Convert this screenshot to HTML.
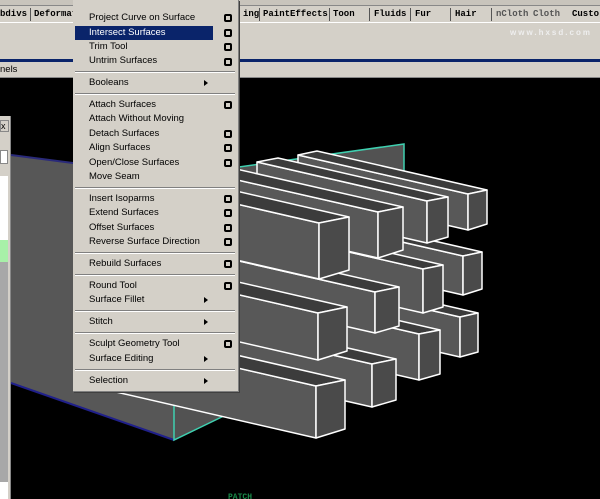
<!DOCTYPE html>
<html><head><meta charset="utf-8"><style>
*{margin:0;padding:0;box-sizing:border-box}
body{width:600px;height:499px;overflow:hidden;background:#000;position:relative;font-family:"Liberation Sans",sans-serif}
.abs{position:absolute}
.tabs{left:0;top:0;width:600px;height:60px;background:#d4d0c8}
.tabrow{top:7px;left:0;height:15px;width:600px;font:bold 9px "Liberation Mono",monospace;color:#000;white-space:nowrap}
.tabrow span{position:absolute;top:2px}
.sep{position:absolute;top:1px;width:1px;height:13px;background:#555}
.menu{left:73px;top:0;width:166px;height:392px;background:#d4d0c8;border-right:1px solid #808080;border-bottom:1px solid #808080;box-shadow:1px 1px 0 #404040;font-size:9.5px;color:#000}
.it{position:absolute;left:16px;height:14px;line-height:14px}
.ob{position:absolute;left:151px;width:8px;height:8px;border:2px solid #000;border-radius:2px;background:#d4d0c8}
.ar{position:absolute;left:131px;width:0;height:0;border-left:4px solid #000;border-top:3px solid transparent;border-bottom:3px solid transparent}
.hr{position:absolute;left:2px;width:160px;height:2px;border-top:1px solid #808080;border-bottom:1px solid #fff}
</style></head><body>
<div class="abs tabs"></div>
<div class="abs" style="left:0;top:0;width:600px;height:6px;background:#c8c4bc;border-bottom:1px solid #888"></div>
<div class="abs tabrow">
<span style="left:0">bdivs</span><div class="sep" style="left:30px"></div>
<span style="left:34px">Deformat</span>
<span style="left:243px">ing</span><div class="sep" style="left:259px"></div>
<span style="left:263px">PaintEffects</span><div class="sep" style="left:329px"></div>
<span style="left:333px">Toon</span><div class="sep" style="left:369px"></div>
<span style="left:374px">Fluids</span><div class="sep" style="left:410px"></div>
<span style="left:415px">Fur</span><div class="sep" style="left:450px"></div>
<span style="left:455px">Hair</span><div class="sep" style="left:491px"></div>
<span style="left:496px;color:#555">nCloth</span>
<span style="left:533px;color:#555">Cloth</span>
<span style="left:572px">Custo</span>
</div>
<div class="abs" style="left:0;top:22px;width:600px;height:1px;background:#fff"></div>
<div class="abs" style="left:0;top:59px;width:600px;height:3px;background:#0a246a"></div>
<div class="abs" style="left:0;top:62px;width:600px;height:16px;background:#d4d0c8;font-size:9.5px;line-height:16px;border-bottom:1px solid #888">nels</div>
<div class="abs" style="left:510px;top:28px;font:bold 8px 'Liberation Sans',sans-serif;color:#eee;letter-spacing:2px">www.hxsd.com</div>

<svg class="abs" style="left:0;top:79px" width="600" height="420" viewBox="0 79 600 420">
<polygon points="11,155 174,176 174,440 11,383" fill="#575757"/>
<polygon points="174,176 404,144 404,300 230,413 174,440" fill="#525252"/>
<polyline points="11,155 174,176" stroke="#2a2a7a" stroke-width="2" fill="none"/>
<polyline points="174,176 404,144 404,200" stroke="#3fd0b0" stroke-width="1.5" fill="none"/>
<polyline points="11,383 174,440" stroke="#20208a" stroke-width="2" fill="none"/>
<polyline points="174,392 174,440 230,413" stroke="#3fd0b0" stroke-width="1.5" fill="none"/>
<path d="M245,248 l12,-2 l-6,5z" fill="#3030a0"/>
<g stroke="#fff" stroke-width="1.5" stroke-linejoin="round">
<polygon points="460,317 460,357 290,318 290,278" fill="#585858"/><polygon points="460,317 478,313 308,274 290,278" fill="#3c3c3c"/><polygon points="460,317 478,313 478,352 460,357" fill="#4a4a4a"/>
<polygon points="463,256 463,295 293,256 293,217" fill="#585858"/><polygon points="463,256 482,252 312,213 293,217" fill="#3c3c3c"/><polygon points="463,256 482,252 482,289 463,295" fill="#4a4a4a"/>
<polygon points="468,194 468,230 298,191 298,155" fill="#585858"/><polygon points="468,194 487,190 317,151 298,155" fill="#3c3c3c"/><polygon points="468,194 487,190 487,224 468,230" fill="#4a4a4a"/>
<polygon points="419,334 419,380 249,341 249,295" fill="#585858"/><polygon points="419,334 440,330 270,291 249,295" fill="#3c3c3c"/><polygon points="419,334 440,330 440,374 419,380" fill="#4a4a4a"/>
<polygon points="423,269 423,313 253,274 253,230" fill="#585858"/><polygon points="423,269 443,265 273,226 253,230" fill="#3c3c3c"/><polygon points="423,269 443,265 443,307 423,313" fill="#4a4a4a"/>
<polygon points="427,201 427,243 257,204 257,162" fill="#585858"/><polygon points="427,201 448,197 278,158 257,162" fill="#3c3c3c"/><polygon points="427,201 448,197 448,237 427,243" fill="#4a4a4a"/>
<polygon points="372,364 372,407 192,366 192,323" fill="#585858"/><polygon points="372,364 396,359 216,318 192,323" fill="#3c3c3c"/><polygon points="372,364 396,359 396,400 372,407" fill="#4a4a4a"/>
<polygon points="375,292 375,333 195,292 195,251" fill="#585858"/><polygon points="375,292 399,287 219,246 195,251" fill="#3c3c3c"/><polygon points="375,292 399,287 399,326 375,333" fill="#4a4a4a"/>
<polygon points="378,212 378,258 198,217 198,171" fill="#585858"/><polygon points="378,212 403,207 223,166 198,171" fill="#3c3c3c"/><polygon points="378,212 403,207 403,250 378,258" fill="#4a4a4a"/>
<polygon points="316,386 316,438 116,392 116,340" fill="#585858"/><polygon points="316,386 345,380 145,334 116,340" fill="#3c3c3c"/><polygon points="316,386 345,380 345,429 316,438" fill="#4a4a4a"/>
<polygon points="318,313 318,360 118,314 118,267" fill="#585858"/><polygon points="318,313 347,307 147,261 118,267" fill="#3c3c3c"/><polygon points="318,313 347,307 347,351 318,360" fill="#4a4a4a"/>
<polygon points="319,223 319,279 119,233 119,177" fill="#585858"/><polygon points="319,223 349,217 149,171 119,177" fill="#3c3c3c"/><polygon points="319,223 349,217 349,270 319,279" fill="#4a4a4a"/>
</g>
<text x="228" y="499" fill="#1a8a4a" font-size="8" font-family="Liberation Mono" font-weight="bold">PATCH</text>
</svg>

<div class="abs" style="left:0;top:116px;width:11px;height:383px;background:#d4d0c8;border-right:1px solid #888"></div>
<div class="abs" style="left:0;top:120px;width:9px;height:12px;border:1px solid #888;font-size:9px;line-height:10px">x</div>
<div class="abs" style="left:0;top:150px;width:8px;height:14px;background:#fff;border:1px solid #888"></div>
<div class="abs" style="left:0;top:176px;width:8px;height:64px;background:#fff"></div>
<div class="abs" style="left:0;top:240px;width:8px;height:22px;background:#a8f0a8"></div>
<div class="abs" style="left:0;top:262px;width:8px;height:220px;background:#a8a8a8"></div>
<div class="abs" style="left:0;top:482px;width:8px;height:17px;background:#fff"></div>

<div class="abs menu">
<div class="it" style="top:11px">Project Curve on Surface</div><div class="ob" style="top:14px"></div>
<div class="abs" style="left:2px;top:26px;width:138px;height:14px;background:#0a246a"></div>
<div class="it" style="top:26px;color:#fff">Intersect Surfaces</div><div class="ob" style="top:29px"></div>
<div class="it" style="top:40px">Trim Tool</div><div class="ob" style="top:43px"></div>
<div class="it" style="top:54px">Untrim Surfaces</div><div class="ob" style="top:58px"></div>
<div class="hr" style="top:71px"></div>
<div class="it" style="top:76px">Booleans</div><div class="ar" style="top:80px"></div>
<div class="hr" style="top:93px"></div>
<div class="it" style="top:98px">Attach Surfaces</div><div class="ob" style="top:101px"></div>
<div class="it" style="top:112px">Attach Without Moving</div>
<div class="it" style="top:127px">Detach Surfaces</div><div class="ob" style="top:130px"></div>
<div class="it" style="top:141px">Align Surfaces</div><div class="ob" style="top:144px"></div>
<div class="it" style="top:156px">Open/Close Surfaces</div><div class="ob" style="top:159px"></div>
<div class="it" style="top:170px">Move Seam</div>
<div class="hr" style="top:187px"></div>
<div class="it" style="top:192px">Insert Isoparms</div><div class="ob" style="top:195px"></div>
<div class="it" style="top:206px">Extend Surfaces</div><div class="ob" style="top:209px"></div>
<div class="it" style="top:221px">Offset Surfaces</div><div class="ob" style="top:224px"></div>
<div class="it" style="top:235px">Reverse Surface Direction</div><div class="ob" style="top:238px"></div>
<div class="hr" style="top:252px"></div>
<div class="it" style="top:257px">Rebuild Surfaces</div><div class="ob" style="top:260px"></div>
<div class="hr" style="top:274px"></div>
<div class="it" style="top:279px">Round Tool</div><div class="ob" style="top:282px"></div>
<div class="it" style="top:293px">Surface Fillet</div><div class="ar" style="top:297px"></div>
<div class="hr" style="top:310px"></div>
<div class="it" style="top:315px">Stitch</div><div class="ar" style="top:319px"></div>
<div class="hr" style="top:332px"></div>
<div class="it" style="top:337px">Sculpt Geometry Tool</div><div class="ob" style="top:340px"></div>
<div class="it" style="top:352px">Surface Editing</div><div class="ar" style="top:356px"></div>
<div class="hr" style="top:369px"></div>
<div class="it" style="top:374px">Selection</div><div class="ar" style="top:378px"></div>
</div>
</body></html>
